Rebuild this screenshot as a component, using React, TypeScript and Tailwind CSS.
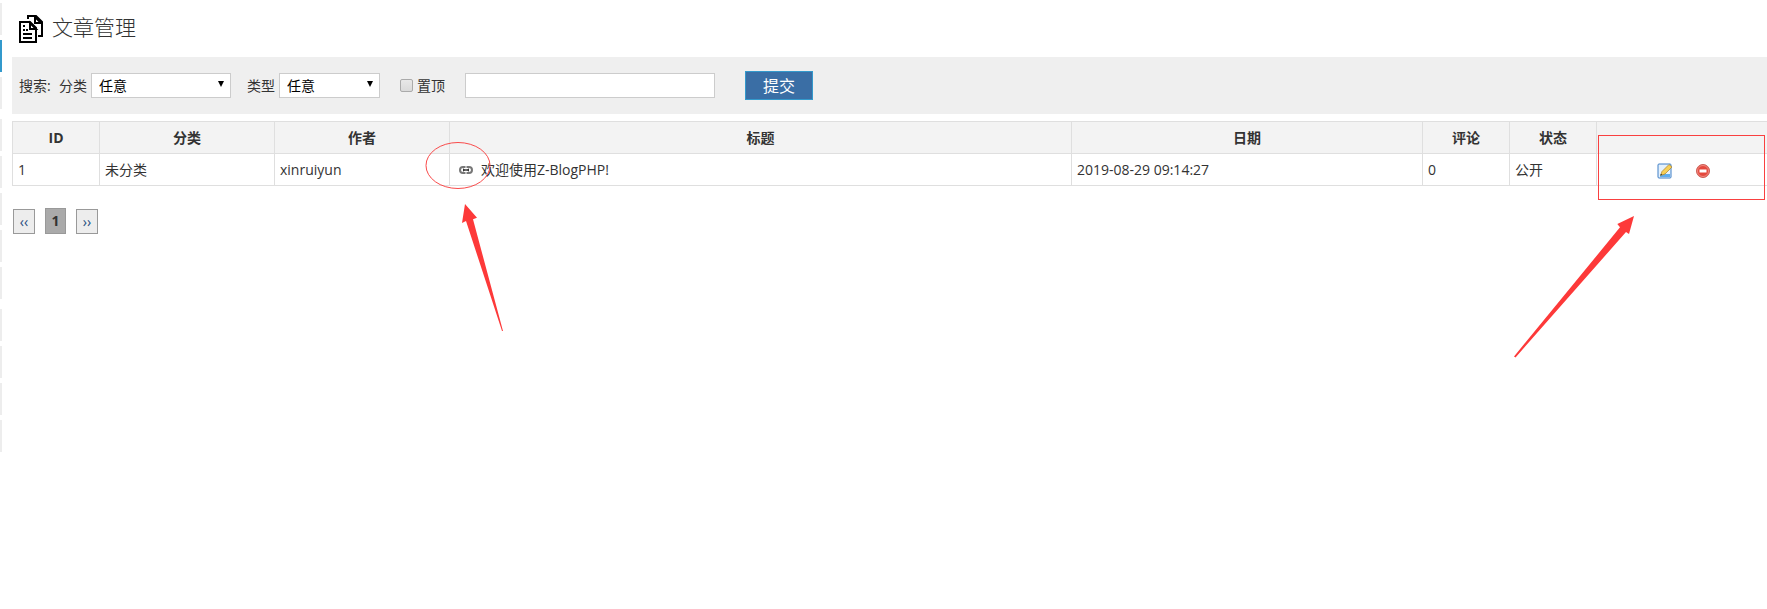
import { useState } from "react";
import type { ReactNode } from "react";

// collapsed side menu, groups are set apart by a wider gap
const menuItems: Array<{ key: string; active?: boolean; groupStart?: boolean }> = [
  { key: "new" },
  { key: "articles", active: true },
  { key: "pages" },
  { key: "categories", groupStart: true },
  { key: "tags" },
  { key: "comments" },
  { key: "uploads" },
  { key: "members" },
  { key: "themes", groupStart: true },
  { key: "modules" },
  { key: "plugins" },
  { key: "apps" },
];

const columns = [
  { label: "ID", width: "w-[87px]" },
  { label: "分类", width: "w-[175px]" },
  { label: "作者", width: "w-[175px]" },
  { label: "标题", width: "" },
  { label: "日期", width: "w-[351px]" },
  { label: "评论", width: "w-[87px]" },
  { label: "状态", width: "w-[87px]" },
  { label: "", width: "w-[175px]" },
];

const articles = [
  {
    id: 1,
    category: "未分类",
    author: "xinruiyun",
    title: "欢迎使用Z-BlogPHP!",
    date: "2019-08-29 09:14:27",
    comments: 0,
    status: "公开",
  },
];

function ArticlesIcon() {
  return (
    <svg width="24" height="28" viewBox="0 0 24 28" fill="none" stroke="#000" strokeWidth="2">
      <path d="M9 4V1h8l6 6v14h-4" />
      <path d="M16 2v6h6z" />
      <path d="M1 7h10l6 6v14H1z" />
      <path d="M11 8v6h6z" />
      <path d="M4 11h2M4 15h2M7 15h2M4 19h9M4 23h9" strokeWidth="2" shapeRendering="crispEdges" />
    </svg>
  );
}

function LinkIcon() {
  return (
    <svg width="14" height="8" viewBox="0 0 14 8" fill="none">
      <rect x="1" y="1" width="12" height="6" rx="3" stroke="#777" strokeWidth="2" />
      <path d="M7 0v2M7 6v2" stroke="#bbb" strokeWidth="2" />
      <path d="M4.500 2.500v3M9.500 2.500v3" stroke="#555" />
      <path d="M4 4h6" stroke="#333" strokeWidth="2" />
      <path d="M5.500 4h3" stroke="#aaa" />
    </svg>
  );
}

function EditIcon() {
  return (
    <svg width="16" height="16" viewBox="0 0 16 16">
      <rect x="1" y="1" width="13" height="14" rx="1" fill="#e4f1fd" stroke="#3f7fc6" />
      <path d="M3 11h10v3H3z" fill="#5cacf0" />
      <path d="M3.500 12.500 5 8.500 12 1.500l3 2.500-7 7z" fill="#f7cf56" stroke="#a8812d" strokeWidth=".7" />
      <path d="M3.500 12.500l.6-1.800 1.200 1.100z" fill="#333" />
    </svg>
  );
}

function DeleteIcon() {
  return (
    <svg width="16" height="16" viewBox="0 0 16 16">
      <circle cx="8" cy="8" r="6.500" fill="#e4483d" stroke="#cc6058" />
      <circle cx="8" cy="8" r="5.500" fill="none" stroke="#f08a80" />
      <rect x="4.500" y="6.500" width="7" height="3" fill="#fff" />
    </svg>
  );
}

function FilterSelect({ id, label, width }: { id: string; label: string; width: string }) {
  return (
    <div className="flex items-center gap-1">
      <label htmlFor={id}>{label}</label>
      <div className={`relative ${width}`}>
        <select
          id={id}
          className="block h-[25px] w-full appearance-none border border-[#ccc] bg-white pl-[7px] text-sm leading-5 text-black"
        >
          <option>任意</option>
        </select>
        <svg className="pointer-events-none absolute top-2 right-[7px]" width="6" height="6" viewBox="0 0 6 6">
          <path d="M0 0h6L3 6z" fill="#000" />
        </svg>
      </div>
    </div>
  );
}

function Cell({ children }: { children: ReactNode }) {
  return <td className="h-8 border border-[#dfdfdf] px-[5px]">{children}</td>;
}

// hand-drawn red marks over the list
function Annotations() {
  return (
    <>
      <svg className="pointer-events-none absolute top-[140px] left-[424px]" width="90" height="194" viewBox="424 140 90 194">
        <ellipse cx="458" cy="165.500" rx="32" ry="23" fill="none" stroke="#f94b4b" />
        <path d="M465 204 477 217.700 473 219.300 503 331 502 331 466 221 462 223z" fill="#fd3939" />
      </svg>
      <svg className="pointer-events-none absolute top-[132px] right-0" width="257" height="230" viewBox="1510 132 257 230">
        <rect x="1598.500" y="135.500" width="166" height="64" fill="none" stroke="#f94040" />
        <path d="M1634 216 1629 234 1626 232 1515.500 357.500 1514 356.500 1620 227.300 1617.300 224z" fill="#fd3939" />
      </svg>
    </>
  );
}

export default function App() {
  const [pinned, setPinned] = useState(false);
  const [keyword, setKeyword] = useState("");

  return (
    <div className="relative flex min-h-screen overflow-hidden bg-white font-['Open_Sans','Noto_Sans_CJK_SC',sans-serif] text-sm text-[#333]">
      <nav className="flex w-[2px] shrink-0 flex-col gap-[5px] pt-[3px]">
        {menuItems.map((item) => (
          <a
            key={item.key}
            href="#"
            aria-label={item.key}
            className={`block h-8 ${item.active ? "bg-[#3399cc]" : "bg-[#ededed]"} ${item.groupStart ? "mt-[5px]" : ""}`}
          />
        ))}
      </nav>

      <main className="ml-[10px] min-w-0 flex-1">
        <header className="flex h-[57px] items-center gap-[9px] pl-[7px]">
          <ArticlesIcon />
          <h1 className="pb-1 text-[21px] leading-8 font-light">文章管理</h1>
        </header>

        <form className="flex h-[57px] items-center bg-[#efefef] pl-[7px]" onSubmit={(e) => e.preventDefault()}>
          <span className="w-10">搜索:</span>
          <FilterSelect id="category" label="分类" width="w-[140px]" />
          <div className="ml-4">
            <FilterSelect id="type" label="类型" width="w-[101px]" />
          </div>
          <label className="ml-5 flex items-center gap-1">
            <input
              type="checkbox"
              checked={pinned}
              onChange={(e) => setPinned(e.target.checked)}
              className="size-[13px] appearance-none rounded-[2px] border border-[#aaa] bg-linear-to-b from-[#e8e8e8] to-[#dadada] checked:bg-[#3a6ea5]"
            />
            置顶
          </label>
          <input
            type="text"
            aria-label="搜索"
            value={keyword}
            onChange={(e) => setKeyword(e.target.value)}
            className="ml-5 h-[25px] w-[250px] border border-[#ccc] bg-white px-1"
          />
          <button type="submit" className="ml-[30px] h-[29px] w-[68px] border border-[#3399cc] bg-[#3a6ea5] text-base leading-6 text-white">
            提交
          </button>
        </form>

        <div className="-mr-[5px] mt-[7px]">
          <table className="w-full table-fixed border-collapse">
            <thead>
              <tr className="bg-[#f3f3f3]">
                {columns.map((col, i) => (
                  <th key={i} className={`h-8 border border-[#dfdfdf] font-bold ${col.width}`}>
                    {col.label}
                  </th>
                ))}
              </tr>
            </thead>
            <tbody>
              {articles.map((a) => (
                <tr key={a.id}>
                  <Cell>{a.id}</Cell>
                  <Cell>{a.category}</Cell>
                  <Cell>{a.author}</Cell>
                  <Cell>
                    <div className="flex items-center gap-2 pl-1">
                      <a href="#" aria-label="链接">
                        <LinkIcon />
                      </a>
                      <span>{a.title}</span>
                    </div>
                  </Cell>
                  <Cell>{a.date}</Cell>
                  <Cell>{a.comments}</Cell>
                  <Cell>{a.status}</Cell>
                  <Cell>
                    <div className="flex justify-center gap-[22px] pt-0.5">
                      <a href="#" aria-label="编辑">
                        <EditIcon />
                      </a>
                      <button type="button" aria-label="删除">
                        <DeleteIcon />
                      </button>
                    </div>
                  </Cell>
                </tr>
              ))}
            </tbody>
          </table>
        </div>

        <div className="mt-[22px] flex items-end gap-[10px] pl-px">
          <a href="#" className="flex h-[25px] w-[22px] items-center justify-center border border-[#999] bg-[#ededed] text-sm text-[#1d4c7d]">
            ‹‹
          </a>
          <span className="flex h-[26px] w-[21px] items-center justify-center border border-[#999] bg-[#aaa] text-sm font-bold">
            1
          </span>
          <a href="#" className="flex h-[25px] w-[22px] items-center justify-center border border-[#999] bg-[#ededed] text-sm text-[#1d4c7d]">
            ››
          </a>
        </div>
      </main>

      <Annotations />
    </div>
  );
}
